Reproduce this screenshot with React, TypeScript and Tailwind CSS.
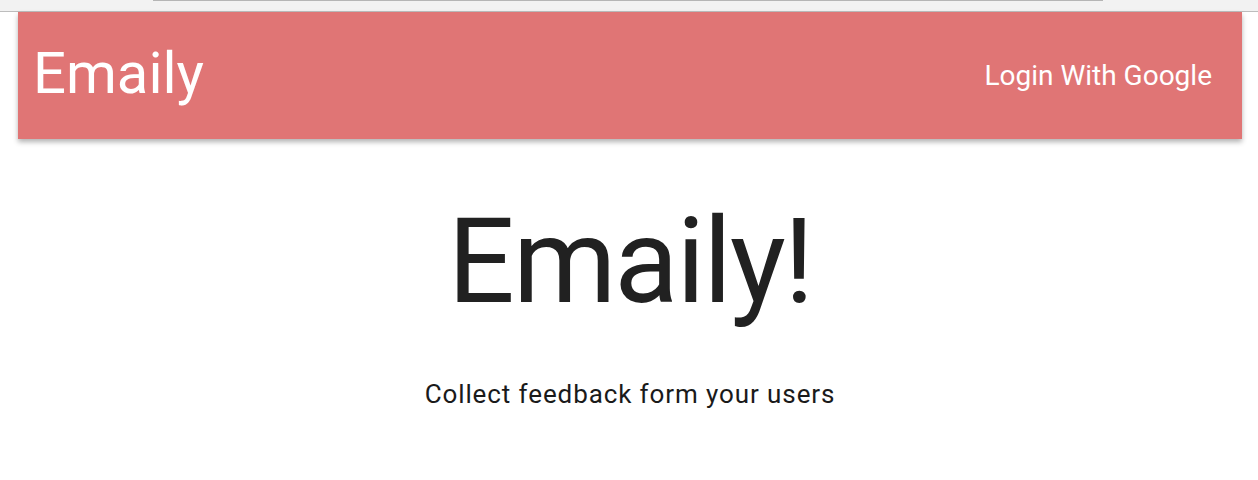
export default function App() {
  return (
    <div className="min-h-screen bg-white" style={{ fontFamily: "Roboto, sans-serif" }}>
      {/* browser strip */}
      <div className="h-3 bg-[#f2f2f2] border-b border-[#bdbdbd] flex justify-center">
        <div className="w-[950px] h-px bg-[#b5b5b5] ml-[-2px]" />
      </div>

      <div className="px-[18px] pr-[16px]">
        <nav className="h-[127px] bg-[#e07575] flex items-center justify-between shadow-[0_3px_5px_rgba(0,0,0,0.3)]">
          <a className="text-white text-[58px] leading-none pl-[15px] pb-[5px]">Emaily</a>
          <a className="text-white text-[28px] leading-none pr-[30px]">Login With Google</a>
        </nav>

        <div className="flex flex-col items-center">
          <h1 className="text-[#212121] text-[118px] leading-none tracking-[-2px] mt-[64px]">Emaily!</h1>
          <p className="text-[#1a1a1a] text-[26px] leading-none tracking-[0.9px] mt-[60px]">Collect feedback form your users</p>
        </div>
      </div>
    </div>
  );
}
